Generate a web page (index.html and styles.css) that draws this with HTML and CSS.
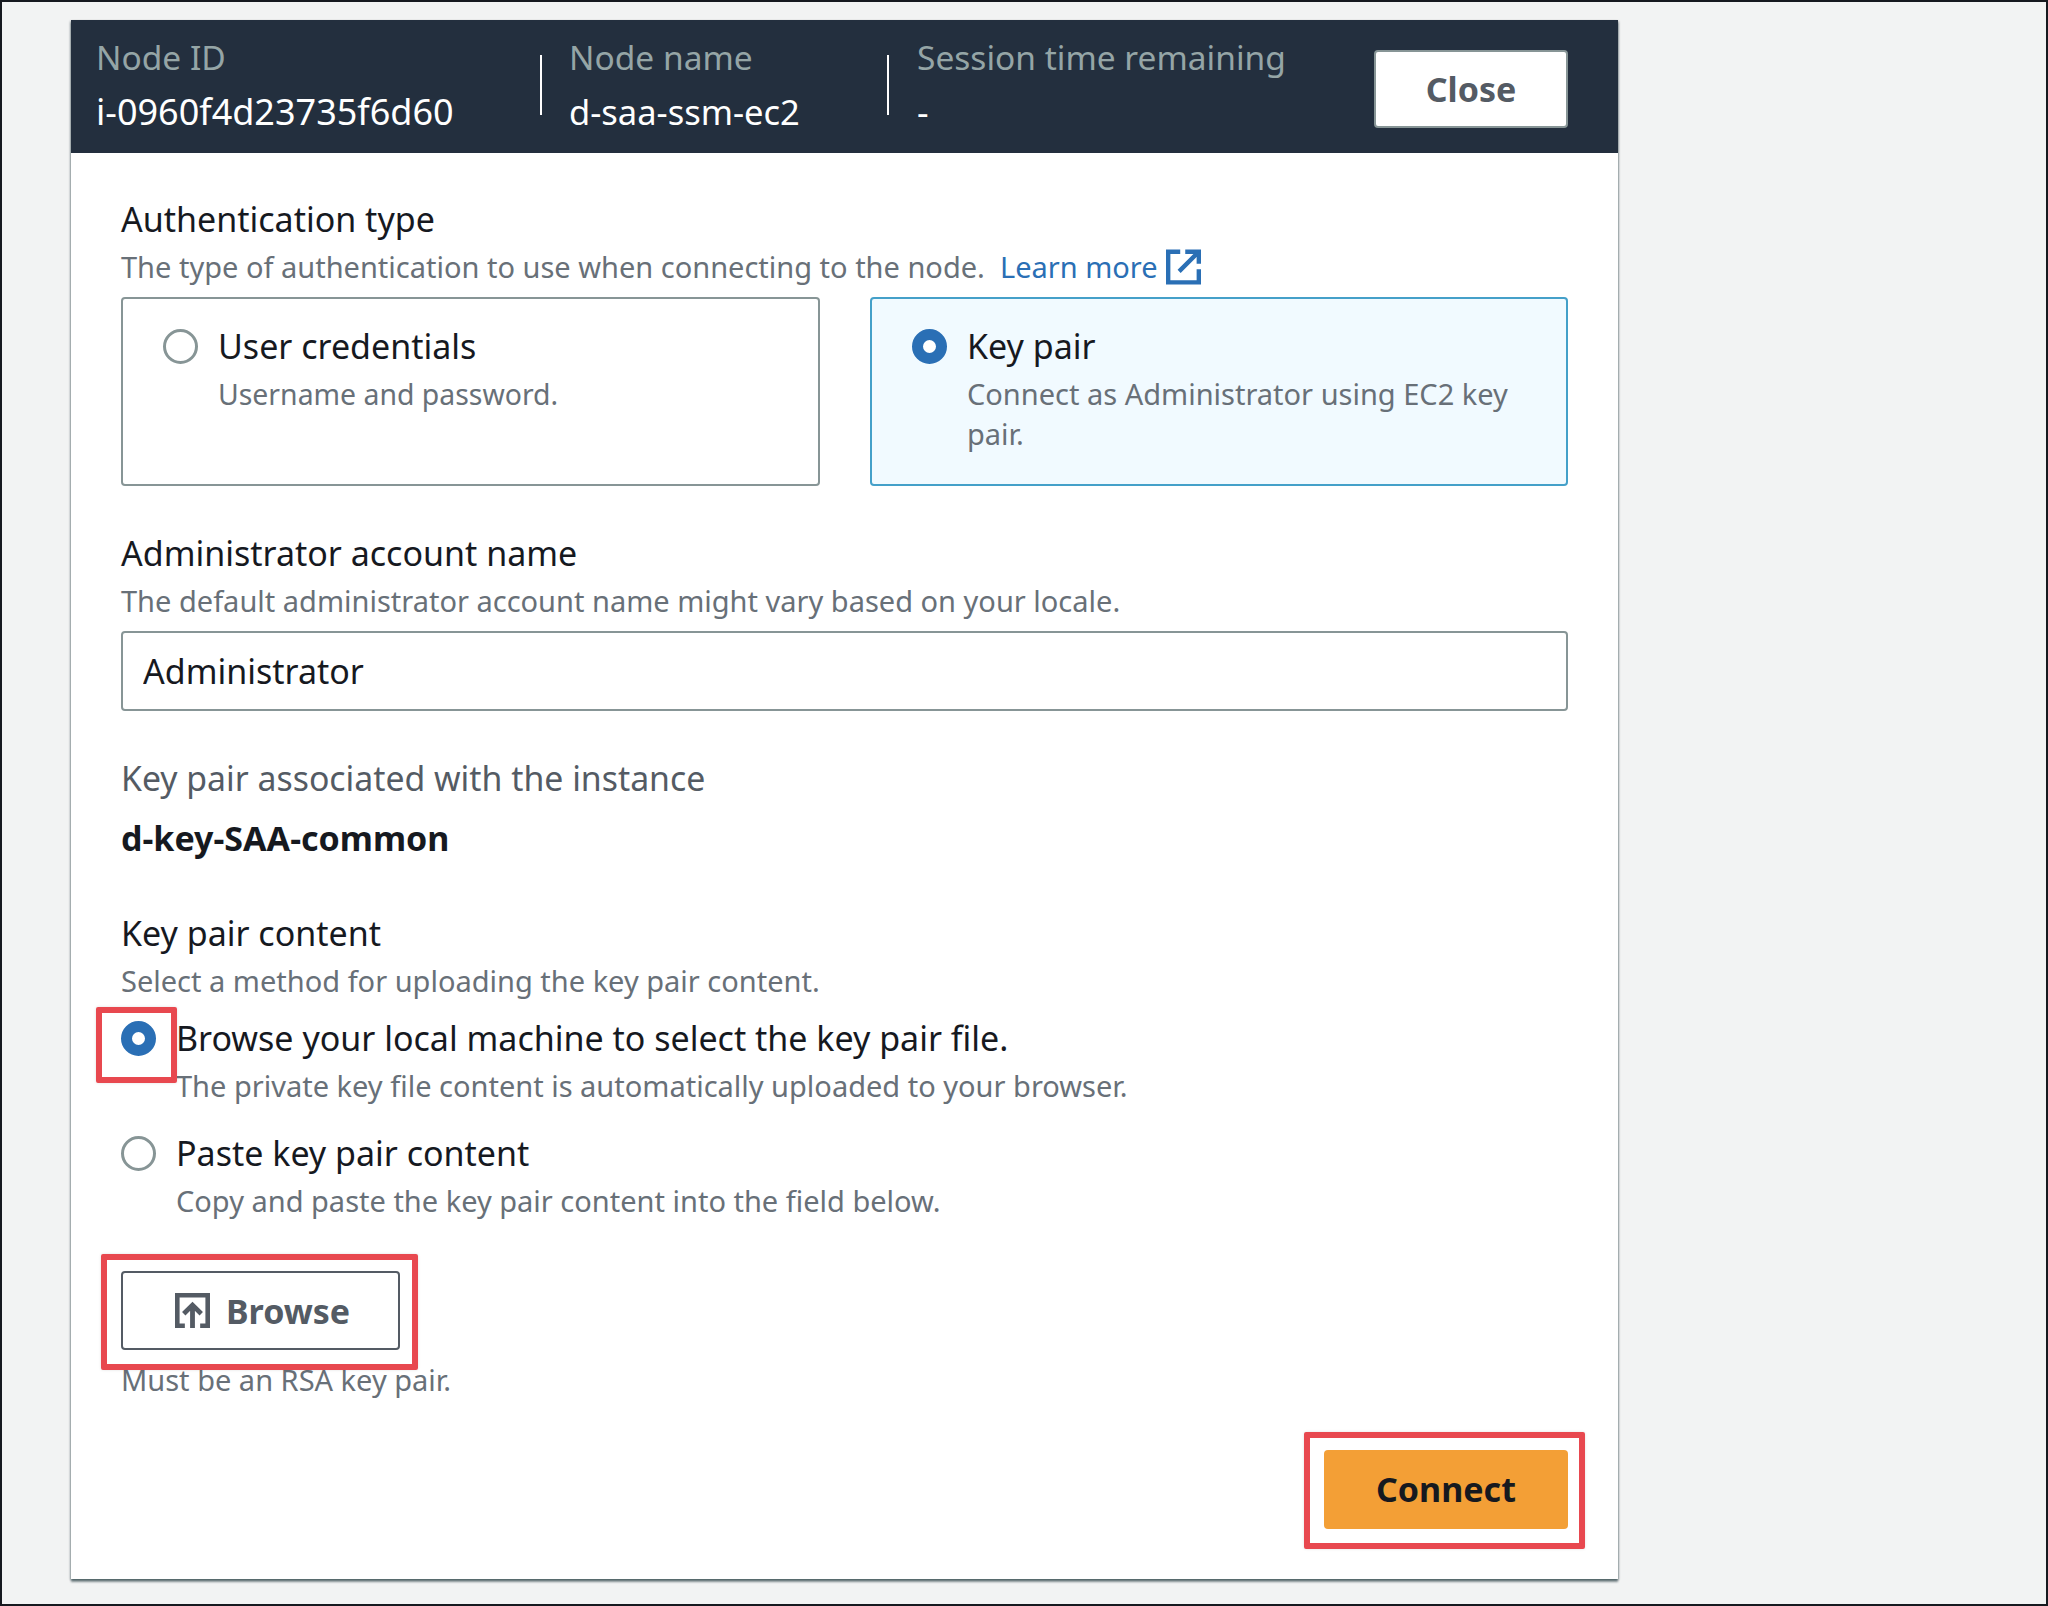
FILE: index.html
```html
<!DOCTYPE html>
<html lang="en">
<head>
<meta charset="utf-8">
<title>Connect to node</title>
<link rel="stylesheet" href="styles.css">
</head>
<body>
<div class="frame">
  <main class="card">
    <header class="bar">
      <div class="stat stat-id"><span class="stat-key">Node ID</span><span class="stat-val">i-0960f4d23735f6d60</span></div>
      <div class="stat stat-name"><span class="stat-key">Node name</span><span class="stat-val stat-val-name">d-saa-ssm-ec2</span></div>
      <div class="stat stat-time"><span class="stat-key">Session time remaining</span><span class="stat-val">-</span></div>
      <button class="btn-close">Close</button>
    </header>
    <div class="form">
      <section class="sec-auth">
        <div class="label">Authentication type</div>
        <div class="desc">The type of authentication to use when connecting to the node.&nbsp; <a class="link">Learn more</a>
          <svg class="ext" viewBox="0 0 16 16" fill="none"><path d="M6.500 1H1v14h14V9M8.800 1H15v5.500M14.700 1.300 6 10"/></svg>
        </div>
        <div class="tiles">
          <div class="tile">
            <span class="radio"></span>
            <div><div class="opt">User credentials</div><div class="desc desc-tight">Username and password.</div></div>
          </div>
          <div class="tile tile-on">
            <span class="radio radio-on"></span>
            <div><div class="opt">Key pair</div><div class="desc">Connect as Administrator using EC2 key pair.</div></div>
          </div>
        </div>
      </section>
      <section class="sec-admin">
        <div class="label">Administrator account name</div>
        <div class="desc">The default administrator account name might vary based on your locale.</div>
        <input class="field" value="Administrator">
      </section>
      <section class="sec-assoc">
        <div class="label label-muted">Key pair associated with the instance</div>
        <div class="keyname">d-key-SAA-common</div>
      </section>
      <section class="sec-content">
        <div class="label">Key pair content</div>
        <div class="desc">Select a method for uploading the key pair content.</div>
        <div class="choice choice-first">
          <span class="radio radio-on"></span>
          <div><div class="opt">Browse your local machine to select the key pair file.</div><div class="desc">The private key file content is automatically uploaded to your browser.</div></div>
        </div>
        <div class="choice choice-second">
          <span class="radio"></span>
          <div><div class="opt">Paste key pair content</div><div class="desc">Copy and paste the key pair content into the field below.</div></div>
        </div>
        <button class="btn-browse">
          <svg class="up" viewBox="0 0 16 16" fill="none"><path d="M4.500 15H1V1h14v14h-3.500M8 16V5.500M4 9.500l4-4 4 4"/></svg>
          Browse
        </button>
        <div class="desc hint">Must be an RSA key pair.</div>
      </section>
      <div class="actions"><button class="btn-connect">Connect</button></div>
    </div>
    <span class="mark mark-radio"></span>
    <span class="mark mark-browse"></span>
    <span class="mark mark-connect"></span>
  </main>
</div>
</body>
</html>
```
FILE: styles.css
```css
* { box-sizing: border-box; }
html, body { margin: 0; padding: 0; }
body { font-family: "Noto Sans", "Open Sans", sans-serif; color: #16191f; }
.frame {
  width: 2048px; height: 1606px;
  background: #f2f3f3;
  border-style: solid; border-color: #16191f;
  border-width: 2px;
  padding: 18px 0 0 69px;
}
.card {
  position: relative;
  width: 1547px; height: 1559px;
  background: #fff;
  box-shadow: 0 3px 2px 0 rgba(0,28,36,.45), 1px 1px 2px 0 rgba(0,28,36,.28), -1px 1px 2px 0 rgba(0,28,36,.28);
}
.bar {
  height: 133px; background: #232f3e;
  display: flex; align-items: flex-start;
  padding: 10px 50px 0 25px;
}
.stat { display: flex; flex-direction: column; position: relative; }
.stat-key { color: #95a5a6; font-size: 33.500px; line-height: 54px; }
.stat-val { color: #fff; font-size: 36px; line-height: 55px; }
.stat-val-name { font-size: 34.500px; }
.stat-id { width: 473px; }
.stat-name { width: 348px; }
.stat-time { flex: 1; }
.stat-name::before { content: ""; position: absolute; left: -29px; top: 25px; width: 2px; height: 60px; background: #fff; }
.stat-time::before { content: ""; position: absolute; left: -30px; top: 25px; width: 2px; height: 60px; background: #fff; }
.btn-close {
  margin-top: 20px;
  width: 194px; height: 78px;
  background: #fff; border: 2px solid #879596; border-radius: 4px;
  font: 700 34px "Noto Sans", sans-serif; color: #545b64;
}
.form { padding: 47px 50px 0; }
.label { font-size: 34px; line-height: 40px; color: #16191f; margin: -1px 0 1px; }
.label-muted { color: #545b64; font-size: 33.800px; }
.desc { font-size: 29px; line-height: 40px; color: #687078; margin: 8px 0 1px; }
.desc-tight { font-size: 28.400px; }
.link { color: #2a6fb5; }
.ext { width: 35px; height: 36px; vertical-align: -7px; margin-left: 1px; }
.ext path { stroke: #2a6fb5; stroke-width: 2; }
.tiles { display: grid; grid-template-columns: 699px 698px; column-gap: 50px; margin-top: 10px; }
.tile {
  height: 189px; border: 2px solid #879596; border-radius: 4px;
  display: flex; gap: 20px; padding: 27px 40px;
}
.tile-on { background: #f1faff; border-color: #44a0c9; }
.radio {
  flex: none; width: 35px; height: 35px; border-radius: 50%;
  border: 3px solid #879596; background: #fff; margin-top: 3px;
}
.radio-on { border: 11px solid #2a6fb5; }
.opt { font-size: 34px; line-height: 40px; color: #16191f; }
.sec-admin { margin-top: 48px; }
.field {
  display: block; width: 100%; height: 80px; margin-top: 10px; padding: 0 20px;
  border: 2px solid #879596; border-radius: 4px; outline: none;
  font: 34px "Noto Sans", sans-serif; color: #16191f; background: #fff;
}
.sec-assoc { margin-top: 48px; }
.keyname { font-size: 34px; line-height: 40px; font-weight: 700; margin-top: 20px; }
.sec-content { margin-top: 56px; }
.choice { display: flex; gap: 20px; }
.choice-first { margin-top: 17px; }
.choice-second { margin-top: 26px; }
.btn-browse {
  display: flex; align-items: center; gap: 16px;
  width: 279px; height: 79px; margin-top: 49px; padding: 0 0 0 52px;
  background: #fff; border: 2px solid #545b64; border-radius: 4px;
  font: 700 34px "Noto Sans", sans-serif; color: #545b64;
}
.up { width: 35px; height: 35px; }
.up path { stroke: #545b64; stroke-width: 2.200; }
.hint { margin-top: 10px; }
.actions { display: flex; justify-content: flex-end; margin-top: 50px; }
.btn-connect {
  width: 244px; height: 79px; padding: 0 0 2px; background: #f39f36; border: 0; border-radius: 4px;
  font: 700 34px "Noto Sans", sans-serif; color: #16191f;
}
.mark {
  position: absolute; border: 6px solid #e8484f; border-radius: 2px;
  box-shadow: 0 0 3px rgba(0,0,0,.12);
}
.mark-radio { left: 25px; top: 987px; width: 81px; height: 76px; }
.mark-browse { left: 30px; top: 1234px; width: 317px; height: 116px; }
.mark-connect { left: 1233px; top: 1412px; width: 281px; height: 117px; }
```
